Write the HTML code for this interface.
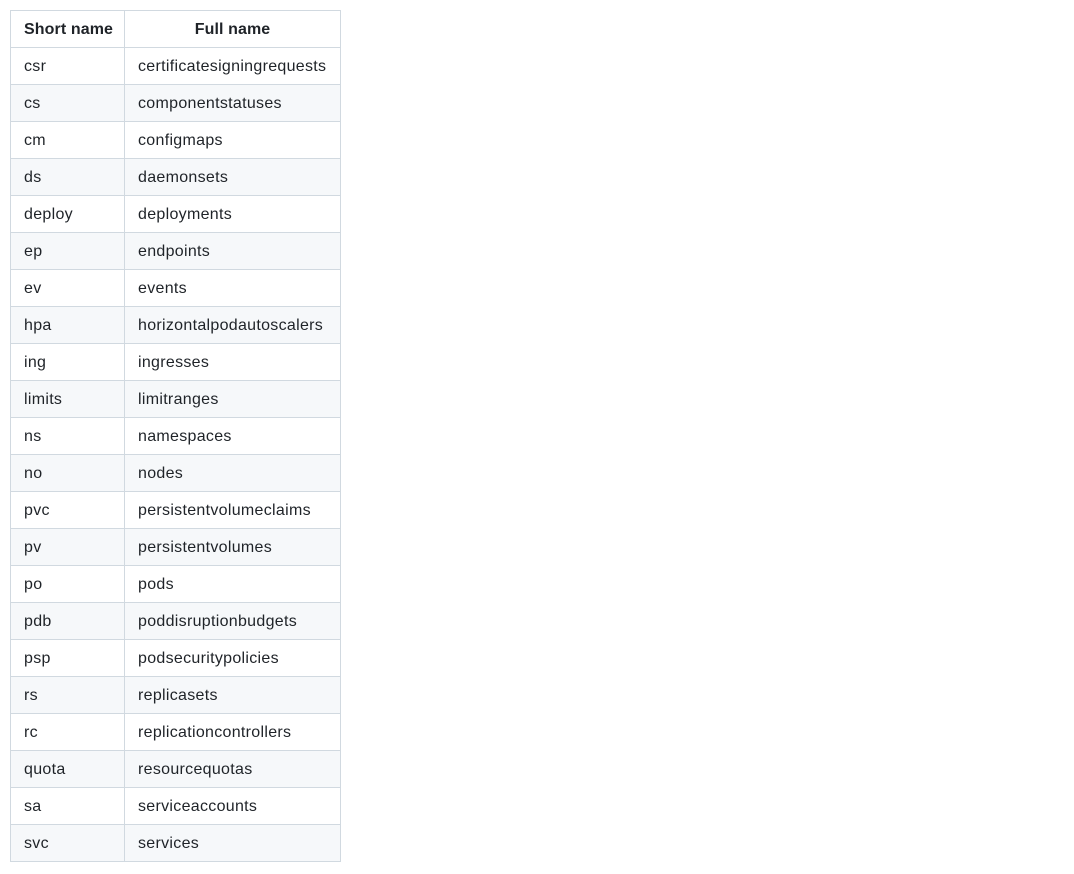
<!DOCTYPE html>
<html><head><meta charset="utf-8"><style>
body{margin:0;background:#fff;font-family:"Liberation Sans",sans-serif;font-size:16px;color:#1f2328}
table{position:absolute;left:10px;top:10px;border-collapse:collapse;table-layout:fixed;width:330px}
td,th{border:1px solid #d1d9e0;padding:7px 13px 5px;height:24px;line-height:24px;white-space:nowrap;text-align:left;letter-spacing:0.3px}
th{font-weight:bold;text-align:center;letter-spacing:0.1px}
th:first-child{text-align:left}
tr:nth-child(odd) td{background:#f6f8fa}
</style></head><body>
<table>
<colgroup><col style="width:114px"><col style="width:216px"></colgroup>
<tr><th>Short name</th><th>Full name</th></tr>
<tr><td>csr</td><td>certificatesigningrequests</td></tr>
<tr><td>cs</td><td>componentstatuses</td></tr>
<tr><td>cm</td><td>configmaps</td></tr>
<tr><td>ds</td><td>daemonsets</td></tr>
<tr><td>deploy</td><td>deployments</td></tr>
<tr><td>ep</td><td>endpoints</td></tr>
<tr><td>ev</td><td>events</td></tr>
<tr><td>hpa</td><td>horizontalpodautoscalers</td></tr>
<tr><td>ing</td><td>ingresses</td></tr>
<tr><td>limits</td><td>limitranges</td></tr>
<tr><td>ns</td><td>namespaces</td></tr>
<tr><td>no</td><td>nodes</td></tr>
<tr><td>pvc</td><td>persistentvolumeclaims</td></tr>
<tr><td>pv</td><td>persistentvolumes</td></tr>
<tr><td>po</td><td>pods</td></tr>
<tr><td>pdb</td><td>poddisruptionbudgets</td></tr>
<tr><td>psp</td><td>podsecuritypolicies</td></tr>
<tr><td>rs</td><td>replicasets</td></tr>
<tr><td>rc</td><td>replicationcontrollers</td></tr>
<tr><td>quota</td><td>resourcequotas</td></tr>
<tr><td>sa</td><td>serviceaccounts</td></tr>
<tr><td>svc</td><td>services</td></tr>
</table>
</body></html>
